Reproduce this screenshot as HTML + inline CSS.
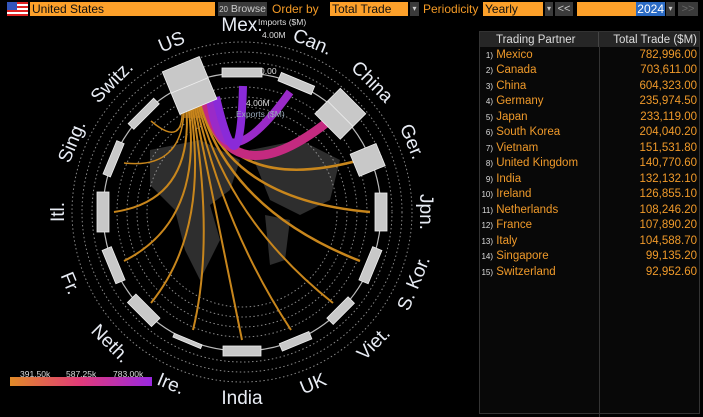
<!DOCTYPE html>
<html><head><meta charset="utf-8"><style>
*{margin:0;padding:0;box-sizing:border-box}
body{width:703px;height:414px;background:#000;overflow:hidden;font-family:"Liberation Sans",sans-serif;position:relative}
.a{position:absolute;white-space:nowrap}
.f{background:#fca02a;color:#111;font-size:12px;line-height:14px;height:14px;padding-left:2px}
.btn{background:#3a3a3a;color:#ccc;font-size:11px;line-height:14px;height:14px;text-align:center;overflow:hidden}
.lb{color:#f39a26;font-size:12px;line-height:14px}
table{border-collapse:collapse;font-size:11.5px}
td{white-space:nowrap}
.n{font-size:8px;display:inline-block;width:13px;text-align:right;color:#ddd}
tr.r{height:15.5px}
.v{text-align:right;padding-right:2px}
</style></head><body>
<div class="a" style="left:7px;top:2px;width:21px;height:14px;background:repeating-linear-gradient(#d22 0 2px,#fff 2px 4px)"><div style="width:10px;height:8px;background:#3355bb"></div></div>
<div class="a f" style="left:30px;top:2px;width:185px">United States</div>
<div class="a btn" style="left:218px;top:2px;width:49px;font-size:10.5px"><span style="font-size:8px">20</span> Browse</div>
<div class="a lb" style="left:272px;top:2px">Order by</div>
<div class="a f" style="left:330px;top:2px;width:78px">Total Trade</div>
<div class="a btn" style="left:410px;top:2px;width:9px;font-size:8px">▾</div>
<div class="a lb" style="left:423px;top:2px">Periodicity</div>
<div class="a f" style="left:483px;top:2px;width:60px">Yearly</div>
<div class="a btn" style="left:545px;top:2px;width:8px;font-size:8px">▾</div>
<div class="a btn" style="left:555px;top:2px;width:18px">&lt;&lt;</div>
<div class="a f" style="left:577px;top:2px;width:88px"><span style="position:absolute;right:0;background:#2b6bc4;color:#fff;padding:0 1px">2024</span></div>
<div class="a btn" style="left:666px;top:2px;width:9px;font-size:8px">▾</div>
<div class="a btn" style="left:678px;top:2px;width:20px;color:#666">&gt;&gt;</div>

<div class="a" style="left:479px;top:31px;width:221px;height:383px;background:#080808;border:1px solid #333">
<table style="width:219px">
<tr style="background:#262626;color:#ddd;height:15px"><td style="width:118px;padding-left:16px;border-right:1px solid #444">Trading Partner</td><td class="v">Total Trade ($M)</td></tr>
</table>
<div style="position:absolute;left:119px;top:15px;width:1px;height:370px;background:#333"></div>
<table style="width:219px;color:#f09a2a">
<tr class="r"><td style="width:118px"><span class="n">1)</span> Mexico</td><td class="v">782,996.00</td></tr>
<tr class="r"><td><span class="n">2)</span> Canada</td><td class="v">703,611.00</td></tr>
<tr class="r"><td><span class="n">3)</span> China</td><td class="v">604,323.00</td></tr>
<tr class="r"><td><span class="n">4)</span> Germany</td><td class="v">235,974.50</td></tr>
<tr class="r"><td><span class="n">5)</span> Japan</td><td class="v">233,119.00</td></tr>
<tr class="r"><td><span class="n">6)</span> South Korea</td><td class="v">204,040.20</td></tr>
<tr class="r"><td><span class="n">7)</span> Vietnam</td><td class="v">151,531.80</td></tr>
<tr class="r"><td><span class="n">8)</span> United Kingdom</td><td class="v">140,770.60</td></tr>
<tr class="r"><td><span class="n">9)</span> India</td><td class="v">132,132.10</td></tr>
<tr class="r"><td><span class="n">10)</span> Ireland</td><td class="v">126,855.10</td></tr>
<tr class="r"><td><span class="n">11)</span> Netherlands</td><td class="v">108,246.20</td></tr>
<tr class="r"><td><span class="n">12)</span> France</td><td class="v">107,890.20</td></tr>
<tr class="r"><td><span class="n">13)</span> Italy</td><td class="v">104,588.70</td></tr>
<tr class="r"><td><span class="n">14)</span> Singapore</td><td class="v">99,135.20</td></tr>
<tr class="r"><td><span class="n">15)</span> Switzerland</td><td class="v">92,952.60</td></tr>
</table>
</div>

<svg class="a" style="left:0;top:0" width="470" height="414" viewBox="0 0 470 414" font-family="Liberation Sans, sans-serif">
<g fill="#2e2e2e">
<path d="M150 150 L200 140 L240 160 L230 190 L210 205 L220 240 L200 280 L185 250 L175 210 L150 185 Z"/>
<path d="M250 150 L300 140 L340 160 L330 200 L300 215 L270 200 Z"/>
<path d="M265 215 L290 220 L285 260 L270 265 Z"/>
</g>
<g fill="none" stroke="#aaa" stroke-width="1" stroke-dasharray="1.5 2.5" opacity="0.8">
<circle cx="242" cy="212" r="95"/><circle cx="242" cy="212" r="105"/><circle cx="242" cy="212" r="115"/><circle cx="242" cy="212" r="125"/><circle cx="242" cy="212" r="150"/><circle cx="242" cy="212" r="160"/><circle cx="242" cy="212" r="170"/>
</g>
<circle cx="242" cy="212" r="139" fill="none" stroke="#bbb" stroke-width="1.2"/>
<g fill="none" stroke="#c8861c">
<path d="M182 104 Q185 150 151 121" stroke-width="1.5"/>
<path d="M184 104 Q185 170 124 163" stroke-width="1.5"/>
<path d="M186 104 Q195 200 114 212" stroke-width="2"/>
<path d="M188 104 Q205 220 124 261" stroke-width="2"/>
<path d="M190 104 Q210 230 151 303" stroke-width="2"/>
<path d="M192 104 Q215 240 193 330" stroke-width="2"/>
<path d="M194 104 Q222 240 242 340" stroke-width="2"/>
<path d="M196 104 Q225 230 291 330" stroke-width="2"/>
<path d="M198 104 Q228 220 333 303" stroke-width="2"/>
<path d="M200 104 Q230 210 360 261" stroke-width="2.5"/>
<path d="M201 104 Q230 200 370 212" stroke-width="2.5"/>
<path d="M202 104 Q232 195 360 160" stroke-width="2.5"/>
<path d="M192 102 L192 118" stroke-width="18" opacity="0.6"/>
</g>
<g fill="none">
<path d="M205 100 Q230 200 330 120" stroke="#c42a80" stroke-width="9"/>
<path d="M210 98 Q220 190 290 92" stroke="#9a2ac8" stroke-width="8"/>
<path d="M216 97 Q240 200 243 86" stroke="#8a2ad8" stroke-width="8"/>
</g>
<g fill="#c8c8c8" stroke="#eee" stroke-width="0.8">
<g transform="rotate(-22.5 242 212)"><rect x="222" y="52" width="40" height="46"/><line x1="222" y1="75" x2="262" y2="75"/></g>
<g><rect x="222" y="68" width="40" height="9"/></g>
<g transform="rotate(22.5 242 212)"><rect x="225" y="68" width="36" height="9"/></g>
<g transform="rotate(45 242 212)"><rect x="224" y="55" width="36" height="36"/><line x1="224" y1="73" x2="260" y2="73"/></g>
<g transform="rotate(67.5 242 212)"><rect x="230" y="62" width="24" height="28"/></g>
<g transform="rotate(90 242 212)"><rect x="223" y="67" width="38" height="12"/></g>
<g transform="rotate(112.5 242 212)"><rect x="224" y="68" width="36" height="10"/></g>
<g transform="rotate(135 242 212)"><rect x="227" y="68" width="30" height="9"/></g>
<g transform="rotate(157.5 242 212)"><rect x="226" y="68" width="32" height="8"/></g>
<g transform="rotate(180 242 212)"><rect x="223" y="68" width="38" height="10"/></g>
<g transform="rotate(202.5 242 212)"><rect x="228" y="70" width="30" height="4"/></g>
<g transform="rotate(225 242 212)"><rect x="225" y="67" width="34" height="12"/></g>
<g transform="rotate(247.5 242 212)"><rect x="224" y="68" width="36" height="10"/></g>
<g transform="rotate(270 242 212)"><rect x="222" y="67" width="40" height="12"/></g>
<g transform="rotate(292.5 242 212)"><rect x="224" y="69" width="36" height="8"/></g>
<g transform="rotate(315 242 212)"><rect x="224" y="69" width="36" height="8"/></g>
</g>
<g fill="#e8ecf4" font-size="19" text-anchor="middle">
<text transform="rotate(-22.5 242 212)" x="242" y="34">US</text>
<text x="242" y="31">Mex.</text>
<text transform="rotate(22.5 242 212)" x="242" y="34">Can.</text>
<text transform="rotate(45 242 212)" x="242" y="34">China</text>
<text transform="rotate(67.5 242 212)" x="242" y="34">Ger.</text>
<text transform="rotate(90 242 212)" x="242" y="34">Jpn.</text>
<text transform="rotate(-67.5 242 212)" x="242" y="404">S. Kor.</text>
<text transform="rotate(-45 242 212)" x="242" y="404">Viet.</text>
<text transform="rotate(-22.5 242 212)" x="242" y="404">UK</text>
<text x="242" y="404">India</text>
<text transform="rotate(22.5 242 212)" x="242" y="404">Ire.</text>
<text transform="rotate(45 242 212)" x="242" y="404">Neth.</text>
<text transform="rotate(67.5 242 212)" x="242" y="404">Fr.</text>
<text transform="rotate(-90 242 212)" x="242" y="34">Itl.</text>
<text transform="rotate(-67.5 242 212)" x="242" y="34">Sing.</text>
<text transform="rotate(-45 242 212)" x="242" y="34">Switz.</text>
</g>
<g fill="#ddd" font-size="8.5">
<text x="258" y="25">Imports ($M)</text><text x="262" y="38">4.00M</text>
<text x="260" y="74">0.00</text><text x="246" y="106">4.00M</text>
<text x="236" y="117" fill="#9ab">Exports ($M)</text>
</g>
<defs><linearGradient id="g"><stop offset="0" stop-color="#e08a28"/><stop offset="0.5" stop-color="#e03a7a"/><stop offset="1" stop-color="#9a28e0"/></linearGradient></defs>
<rect x="10" y="377" width="142" height="9" fill="url(#g)"/>
<g fill="#ddd" font-size="8.5"><text x="20" y="377">391.50k</text><text x="66" y="377">587.25k</text><text x="113" y="377">783.00k</text></g>
</svg>
</body></html>
